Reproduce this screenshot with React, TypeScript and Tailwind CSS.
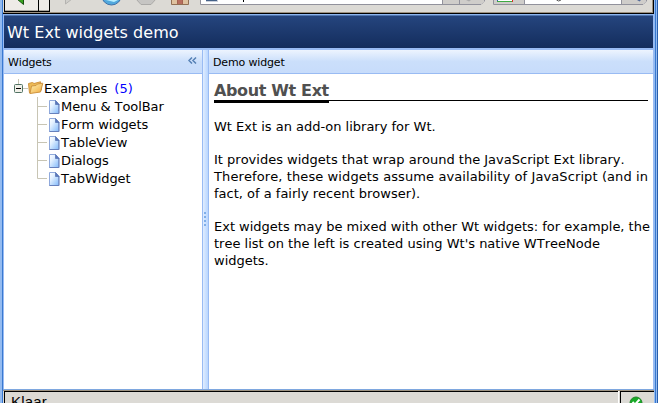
import React from "react";

const font = "font-['DejaVu_Sans',Verdana,sans-serif] [font-kerning:none]";

function FileIcon() {
  return (
    <svg width="11" height="14" viewBox="0 0 11 14" className="block shrink-0">
      <defs>
        <linearGradient id="page" x1="0" y1="0" x2="1" y2="1">
          <stop offset="0" stopColor="#ffffff" />
          <stop offset="0.35" stopColor="#e2f0ff" />
          <stop offset="1" stopColor="#7fb8fa" />
        </linearGradient>
      </defs>
      <path d="M0.5 0.5H6.5L9.9 4V13.5H0.5Z" fill="url(#page)" stroke="#8fa9dc" />
      <path d="M9.9 4V13.5H0.5" fill="none" stroke="#6680bc" />
      <path d="M6.5 0.5V4.5H9.9Z" fill="#5a78bd" stroke="#4a66a8" strokeWidth="0.6" />
    </svg>
  );
}

function FolderIcon() {
  return (
    <svg width="16" height="15" viewBox="0 0 16 15" className="mt-[2px] block shrink-0">
      <defs>
        <linearGradient id="folder" x1="0" y1="0" x2="1" y2="1">
          <stop offset="0" stopColor="#fff3b5" />
          <stop offset="1" stopColor="#f0a93c" />
        </linearGradient>
      </defs>
      <path d="M1.5 12L0.5 2.5L4.5 1.5L6 2.5L12.5 0.8L13.5 9Z" fill="#edba55" stroke="#cf9440" />
      <path d="M2 12.5L3.5 5L8 4.5L9.5 3L14.8 2.2L12.5 11Z" fill="url(#folder)" stroke="#cf9440" />
    </svg>
  );
}

function BrowserBar() {
  return (
    <svg width="651" height="14" viewBox="3 0 651 14" className="block shrink-0">
      <rect x="3" width="651" height="14" fill="#dcdad5" />
      <rect x="4" width="46" height="12" fill="#000" />
      <rect x="5" width="33" height="11" fill="#eeebe7" />
      <rect x="39" width="10" height="11" fill="#eeebe7" />
      <path d="M5 10.5H38M39 10.5H49" stroke="#aaa79f" />
      <path d="M17 -1L23.5 4.5V-1Z" fill="#39a51e" stroke="#174f10" />
      <path d="M65.5 -1V4L72 -1" fill="#d0cfcb" stroke="#b4b3b0" />
      <circle cx="111.5" cy="-5" r="10" fill="#51a8dd" stroke="#3d70a8" />
      <path d="M106 0L114 2L118 0V-1Z" fill="#b9efff" />
      <path d="M136 -1L141 4.5H151L156 -1Z" fill="#c6c5c3" stroke="#aaa9a7" />
      <path d="M171.5 -1H188.5V4.5H171.5Z" fill="#dfc29f" stroke="#927054" />
      <path d="M177.5 -1V4M182.5 -1V4" stroke="#a56250" />
      <rect x="178" width="4" height="4" fill="#b76e5e" />
      <path d="M200.5 -1V4.5H481L484.5 1V-1Z" fill="#fff" stroke="#92929c" />
      <path d="M443 0H484V2L481 4H443Z" fill="#cfcdca" />
      <path d="M442.5 0V4M459.5 0V4" stroke="#92929c" />
      <path d="M466 0H471L469 1.5Z" fill="#aaa" />
      <rect x="206" width="12" height="2" fill="#cbd0dc" /><rect x="206" width="11" height="1" fill="#456288" />
      <rect x="243" width="1" height="2" fill="#000" />
      <path d="M493.5 -1V4.5H643L646.5 1V-1Z" fill="#fff" stroke="#92929c" />
      <path d="M494 0H524V4H494Z" fill="#cfcdca" />
      <path d="M622 0H646V1L643 4H622Z" fill="#cfcdca" />
      <path d="M524.5 0V4M621.5 0V4" stroke="#92929c" />
      <rect x="497" width="16" height="2" fill="#3eaa43" /><rect x="498" width="14" height="1" fill="#fff" />
      <rect x="497" width="1" height="1" fill="#3158bd" /><rect x="512" width="1" height="2" fill="#dc3027" />
      <path d="M556.5 0Q558.5 2 561 0" fill="none" stroke="#555" />
      <path d="M637 0H641L639.5 1.5Z" fill="#536a98" />
      <rect x="3" y="12" width="651" height="1" fill="#9d9281" />
      <rect x="3" y="13" width="651" height="1" fill="#000" />
      <rect x="652" width="1" height="12" fill="#9d9281" />
      <rect x="653" width="1" height="14" fill="#000" />
    </svg>
  );
}

function TreeItem({ label, last = false }: { label: string; last?: boolean }) {
  return (
    <div className="flex h-[18px] items-start">
      <svg width="12" height="18" className="block shrink-0 overflow-visible">
        <path d={last ? "M0.5 -3V6.5H10" : "M0.5 -3V18M0.5 6.5H10"} fill="none" stroke="#c8c5b4" />
      </svg>
      <FileIcon />
      <span className="ml-px -mt-[2px] text-[13px] leading-[18px] tracking-[-0.08px] whitespace-nowrap">{label}</span>
    </div>
  );
}

function PanelHeader({ title, children }: { title: string; children?: React.ReactNode }) {
  return (
    <div className="flex h-6 shrink-0 items-start justify-between border-b border-[#99bbf3] bg-linear-to-b from-[#edf4fe] via-[#cbdffb] to-[#c7dcfb] pt-[4px] pl-1 text-[11px] leading-[16px] tracking-[-0.15px]">
      <span className="pt-px">{title}</span>
      {children}
    </div>
  );
}

export default function App() {
  const items = ["Menu & ToolBar", "Form widgets", "TableView", "Dialogs", "TabWidget"];
  return (
    <div className={`flex h-[403px] w-[658px] overflow-hidden bg-white text-black ${font}`}>
      <div className="w-[3px] shrink-0 border-r border-[#3979d0] bg-[#94bbf0]" />
      <div className="flex w-[651px] shrink-0 flex-col">
        <BrowserBar />
        <div className="flex h-[375px] shrink-0 flex-col border-x border-[#99bbf3]">
          <div className="h-[36px] shrink-0 border-t border-b-2 border-t-[#8db5ef] border-b-[#99bbf3]">
            <div className="h-[33px] border-t border-[#5076b0] bg-linear-to-b from-[#25457e] to-[#142d5d] pt-[7px] pl-[3px] text-[16px] leading-[20px] tracking-[0.04px] text-white">
              Wt Ext widgets demo
            </div>
          </div>
          <div className="flex h-[339px]">
            <div className="flex w-[199px] flex-col border-r border-[#99bbf3]">
              <PanelHeader title="Widgets">
                <svg width="9" height="7" viewBox="0 0 9 7" className="mt-[3px] mr-[5px]">
                  <path d="M4 0.5L1 3.5L4 6.5M8 0.5L5 3.5L8 6.5" fill="none" stroke="#5580b5" strokeWidth="1.5" />
                </svg>
              </PanelHeader>
              <div className="pt-[5px] pl-[9px]">
                <div className="flex h-[21px]">
                  <svg width="15" height="19" viewBox="0 0 15 19" className="block shrink-0">
                    <path d="M5.5 0V6M10 9.5H15" stroke="#c8c5b4" />
                    <rect x="1.5" y="5.5" width="8" height="8" rx="1" fill="#f1f0e9" stroke="#507263" />
                    <path d="M3 9.5H8" stroke="#000" />
                  </svg>
                  <FolderIcon />
                  <span className="text-[13px] leading-[20px] whitespace-pre">Examples <span className="ml-[3px] text-[#0000ff]">(5)</span></span>
                </div>
                <div className="pl-[24px]">
                  {items.map((item, i) => <TreeItem key={item} label={item} last={i === 4} />)}
                </div>
              </div>
            </div>
            <div className="flex w-[5px] flex-col items-center justify-center bg-linear-to-r from-[#e0edff] to-[#b9d6ff]">
              <svg width="3" height="15" className="block">
                <path d="M1 0V15" stroke="#80aee8" strokeWidth="2" strokeDasharray="2 2" />
              </svg>
            </div>
            <div className="flex min-w-0 flex-1 flex-col border-l border-[#99bbf3]">
              <PanelHeader title="Demo widget" />
              <div className="pt-[6px] pr-[5px] pl-[5px] text-[13px] leading-[17px]">
                <div className="h-[23px]">
                  <div className="h-[21px] border-b border-black">
                    <h1 className="inline-block h-[23px] w-[115px] border-b-[3px] border-black pt-px text-[16px] leading-[20px] font-bold tracking-[-0.36px] whitespace-nowrap text-[#505050]">About Wt Ext</h1>
                  </div>
                </div>
                <p className="mt-[15px]">Wt Ext is an add-on library for Wt.</p>
                <p className="mt-[16px] whitespace-nowrap">It provides widgets that wrap around the JavaScript Ext library.<br /><span className="tracking-[0.1px]">Therefore, these widgets assume availability of JavaScript (and in</span><br />fact, of a fairly recent browser).</p>
                <p className="mt-[16px] whitespace-nowrap"><span className="tracking-[-0.01px]">Ext widgets may be mixed with other Wt widgets: for example, the</span><br />tree list on the left is created using Wt's native WTreeNode<br />widgets.</p>
              </div>
            </div>
          </div>
        </div>
        <div className="h-px shrink-0 bg-[#7ea7df]" />
        <div className="h-px shrink-0 bg-[#9d9281]" />
        <div className="flex h-[12px] shrink-0 bg-[#dcdad5] font-['Liberation_Sans',Arial,sans-serif]">
          <div className="w-[614px] border-t border-l border-black pl-[6px] text-[15px] leading-[20px] tracking-[0.2px] ml-px">Klaar</div>
          <div className="w-[2px] border-l border-white" />
          <div className="flex w-[34px] justify-center overflow-hidden border-t border-l border-black pr-[4px]">
            <svg width="14" height="14" viewBox="0 0 14 14" className="mt-[4px] shrink-0">
              <circle cx="7" cy="7" r="6" fill="#18aa27" stroke="#23852b" />
              <path d="M3.5 6L6 8.5L10.5 3.5" fill="none" stroke="#fff" strokeWidth="2" />
            </svg>
          </div>
        </div>
      </div>
      <div className="flex w-[4px] shrink-0">
        <div className="w-px bg-[#94bbf0]" /><div className="w-px bg-[#3979d0]" /><div className="w-px bg-[#94bbf0]" /><div className="w-px bg-[#285eac]" />
      </div>
    </div>
  );
}
